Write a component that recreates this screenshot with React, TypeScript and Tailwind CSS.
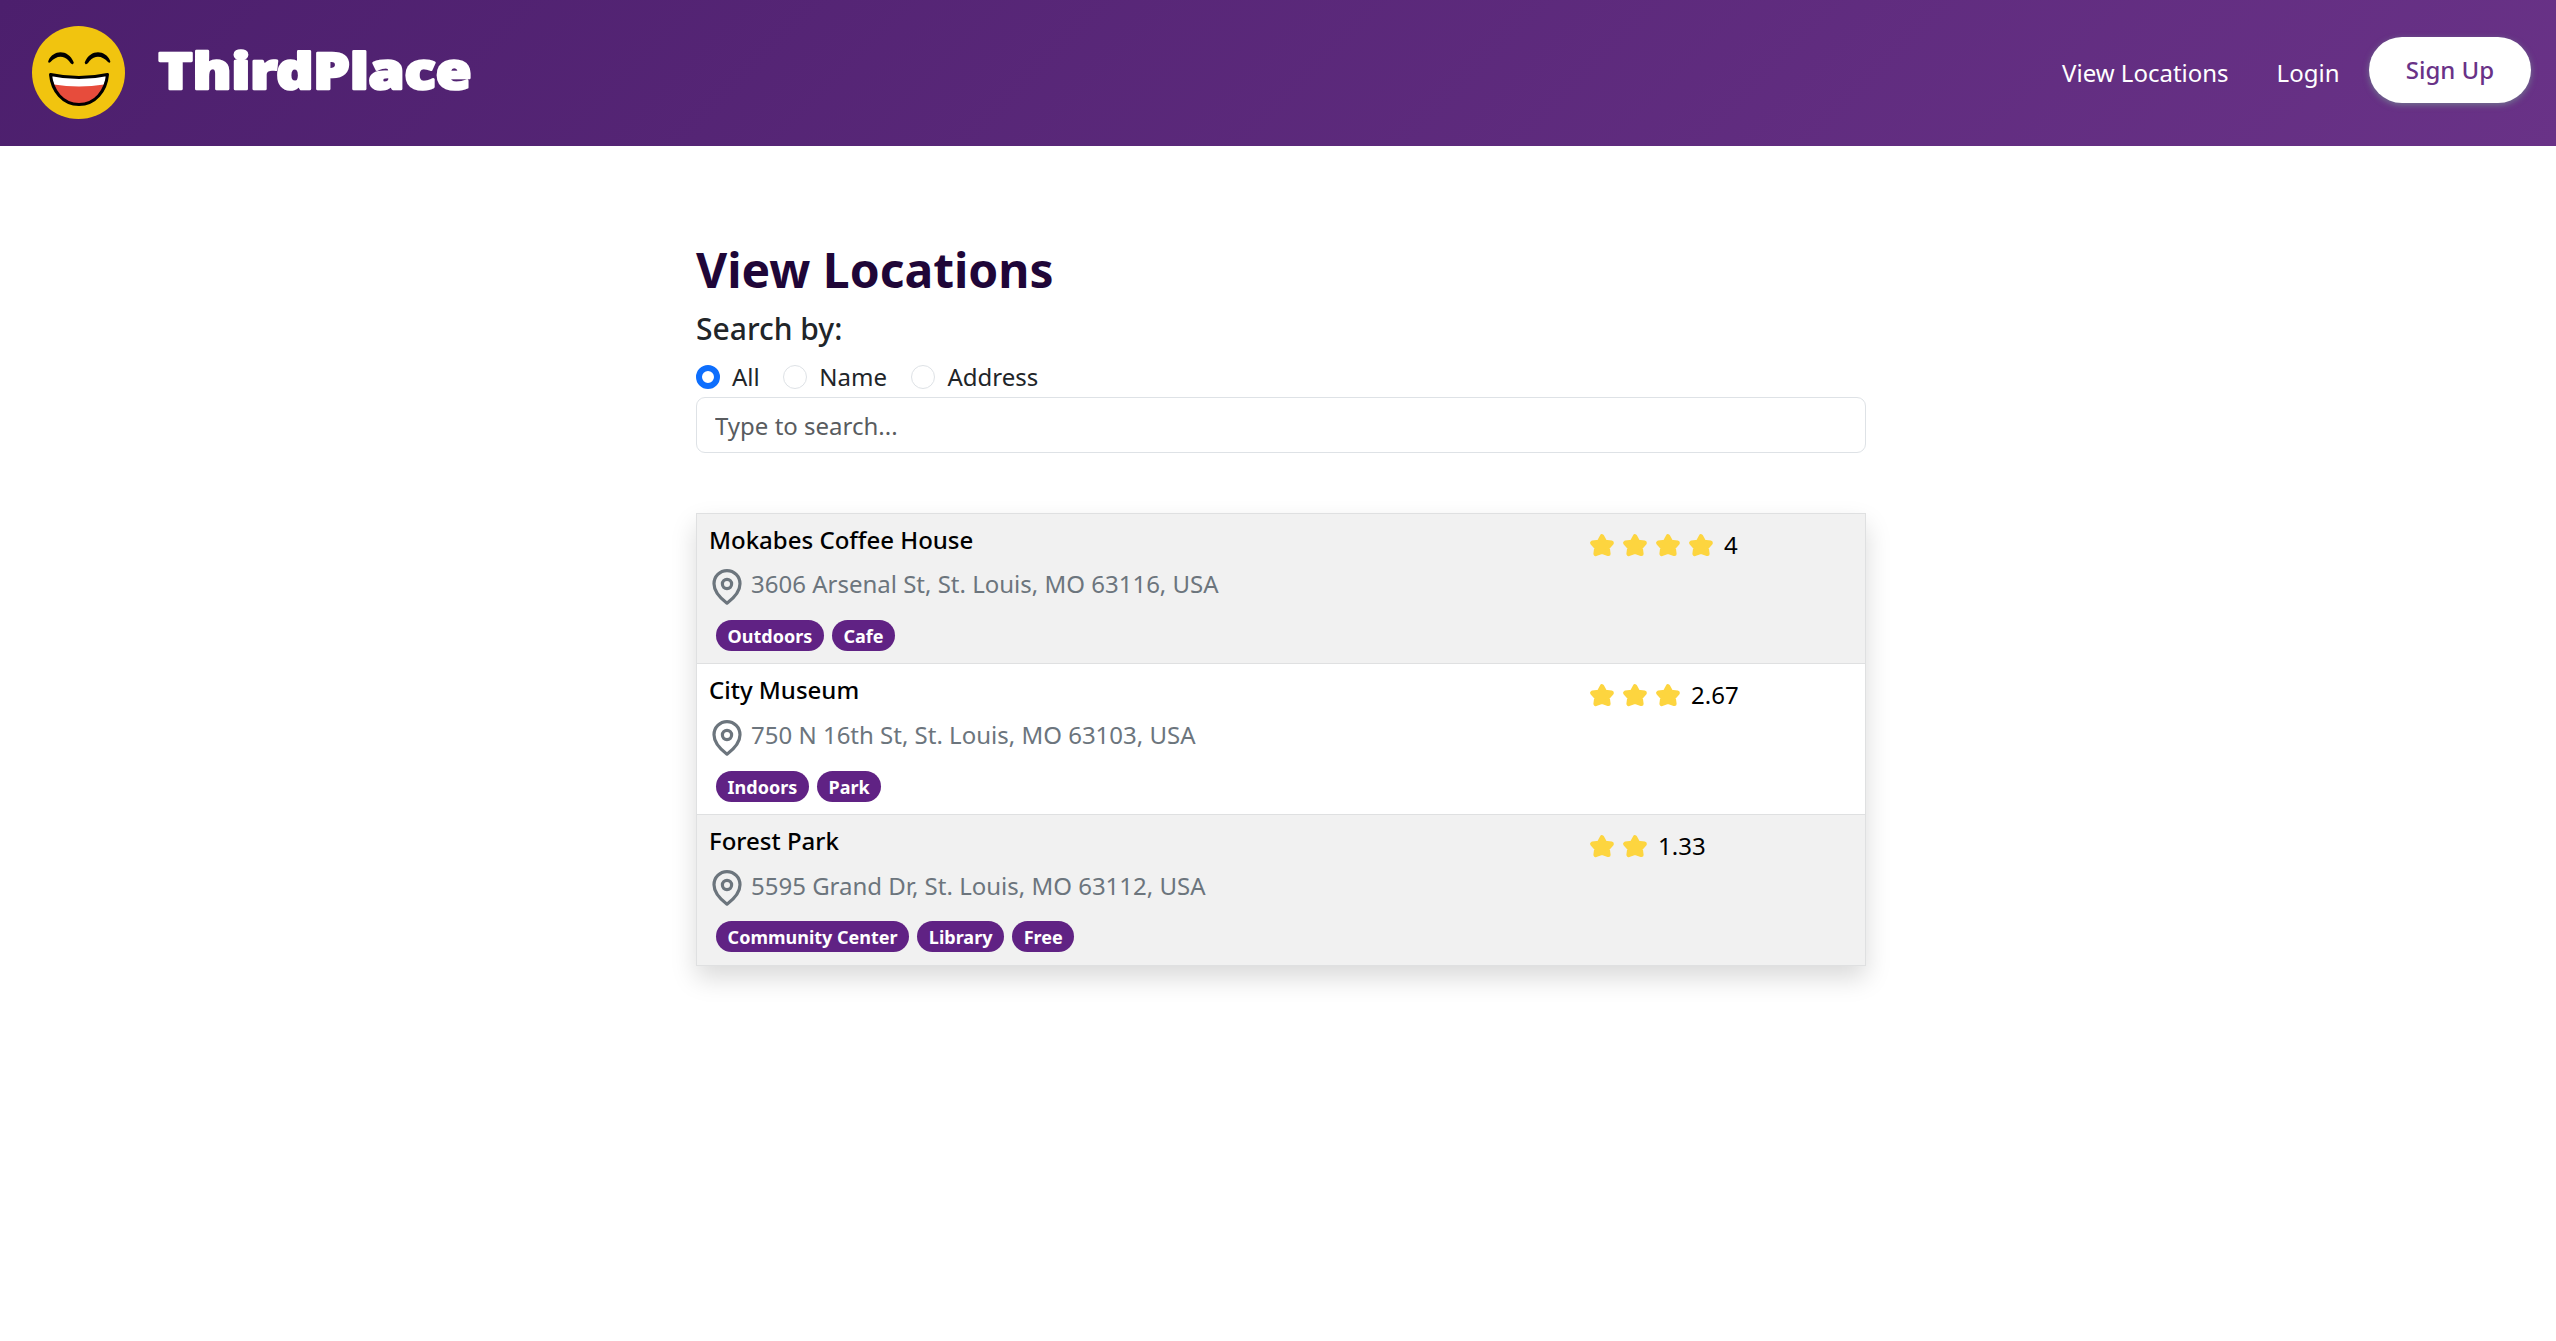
const locations = [
  { name: "Mokabes Coffee House", address: "3606 Arsenal St, St. Louis, MO 63116, USA", tags: ["Outdoors", "Cafe"], stars: 4, rating: "4" },
  { name: "City Museum", address: "750 N 16th St, St. Louis, MO 63103, USA", tags: ["Indoors", "Park"], stars: 3, rating: "2.67" },
  { name: "Forest Park", address: "5595 Grand Dr, St. Louis, MO 63112, USA", tags: ["Community Center", "Library", "Free"], stars: 2, rating: "1.33" },
];

function Smiley() {
  return (
    <svg className="size-[94px] shrink-0" viewBox="0 0 94 94">
      <circle cx="46.500" cy="46.500" r="46.500" fill="#f1c40f" />
      <path d="M16.500 34.500C21 24 36 22.500 41.800 36.500C41 39.500 39.500 38.500 37 35C31 28.500 24 30 18.500 36C17 37.500 15.500 36.500 16.500 34.500Z" fill="#000" />
      <path d="M52.700 36.500C58.500 22.500 73.500 24 78 34.500C79 36.500 77.500 37.500 76 36C70.500 30 63.500 28.500 57.500 35C55 38.500 53.500 39.500 52.700 36.500Z" fill="#000" />
      <path d="M18.500 48.500C37 52.500 57 52.500 75.500 48.500C74 65 63 78.500 47 78.500C31 78.500 20 65 18.500 48.500Z" fill="#e74c3c" />
      <path d="M18.500 48.500C37 52.500 57 52.500 75.500 48.500L72 58.500C56 61 38 61 22 58.500Z" fill="#fff" />
      <path d="M18.500 48.500C37 52.500 57 52.500 75.500 48.500C74 65 63 78.500 47 78.500C31 78.500 20 65 18.500 48.500Z" fill="none" stroke="#000" strokeWidth="3" strokeLinejoin="round" />
    </svg>
  );
}

function Pin() {
  return (
    <svg className="mt-px h-[36px] w-[30px] shrink-0 group-last:mt-0" viewBox="0 0 30 36" fill="none" stroke="#6c757d" strokeWidth="3.200">
      <path d="M15 34.200C10 30.500 2 24 2 14.800A13 13.200 0 0 1 28 14.800C28 24 20 30.500 15 34.200Z" strokeLinejoin="round" />
      <circle cx="15" cy="15" r="4.600" />
    </svg>
  );
}

function Star() {
  return (
    <svg className="h-[24px] w-[24px]" viewBox="0 0 24 24">
      <path d="M12 3.500L15 9L21.500 9.900L17.500 14.600L18.300 20.800L12 18.600L5.700 20.800L6.500 14.600L2.500 9.900L9 9Z" fill="#fdd53f" stroke="#fdd53f" strokeWidth="4.600" strokeLinejoin="round" />
    </svg>
  );
}

export default function App() {
  return (
    <div className="min-h-screen bg-white font-['Noto_Sans',sans-serif] text-2xl leading-[36px] text-[#212529]">
      <header className="flex h-[146px] items-start justify-between bg-[linear-gradient(135deg,#4c1f6d,#693287)]">
        <div className="flex items-center pt-[26px] pl-[32px]">
          <Smiley />
          <svg className="ml-[24px] h-[90px] w-[340px] overflow-visible" viewBox="0 0 340 90">
            <text x="8.500" y="61" textLength="313" lengthAdjust="spacingAndGlyphs" fill="#fff" stroke="#fff" strokeWidth="2.600" strokeLinejoin="round" className="font-['Noto_Sans'] text-[49px] font-black">ThirdPlace</text>
          </svg>
        </div>
        <nav className="flex items-start pr-[25px] text-white">
          <a className="mt-[55px]">View Locations</a>
          <a className="mt-[55px] ml-[48px]">Login</a>
          <a className="mt-[37px] ml-[29.500px] flex h-[66px] w-[162px] items-center justify-center rounded-full bg-white font-medium text-[#693287] shadow-[0_2px_6px_rgba(122,162,151,0.6)]">Sign Up</a>
        </nav>
      </header>
      <main className="ml-[696px] w-[1170px] pt-[92px]">
        <h1 className="text-5xl leading-[64px] font-bold text-[#1f0638]">View Locations</h1>
        <h2 className="mt-[9px] text-3xl leading-[36px] font-medium">Search by:</h2>
        <div className="mt-[12px] flex h-[36px] items-center">
          <span className="size-[24px] rounded-full border-[6px] border-[#0d6efd] bg-white" />
          <span className="ml-[12px]">All</span>
          <span className="ml-[23px] size-[24px] rounded-full border border-[#dee2e6]" />
          <span className="ml-[12.500px]">Name</span>
          <span className="ml-[24.500px] size-[24px] rounded-full border border-[#dee2e6]" />
          <span className="ml-[12px]">Address</span>
        </div>
        <input className="mt-[2px] block h-[56px] w-full rounded-[9px] border border-[#dee2e6] px-[18px] placeholder:text-[#595c5f]" placeholder="Type to search..." />
        <div className="mt-[60px] border border-[#dfe0e1] text-black shadow-[0_12px_24px_rgba(0,0,0,0.15)]">
          {locations.map((l) => (
            <div key={l.name} className="group flex h-[151px] border-b border-[#dfe0e1] first:h-[150px] odd:bg-[#f1f1f1] last:h-[150px] last:border-b-0">
              <div className="w-[892.500px] pt-[8px] pl-[12px]">
                <div className="font-medium">{l.name}</div>
                <div className="mt-[11px] flex h-[37px] items-start gap-[9px] pl-[3px] text-[#6c757d] group-first:mt-[10px]">
                  <Pin />
                  <span className="-mt-[2px]">{l.address}</span>
                </div>
                <div className="mt-[15px] flex gap-[8px] pl-[7px] group-last:mt-[14px]">
                  {l.tags.map((t) => (
                    <span key={t} className="flex h-[31px] items-center rounded-full bg-[#602284] px-[11.600px] text-lg leading-none font-bold text-white">{t}</span>
                  ))}
                </div>
              </div>
              <div className="flex h-[36px] items-center gap-[9px] pt-[26px]">
                {Array.from({ length: l.stars }, (_, i) => <Star key={i} />)}
                <span className="ml-[2.500px]">{l.rating}</span>
              </div>
            </div>
          ))}
        </div>
      </main>
    </div>
  );
}
